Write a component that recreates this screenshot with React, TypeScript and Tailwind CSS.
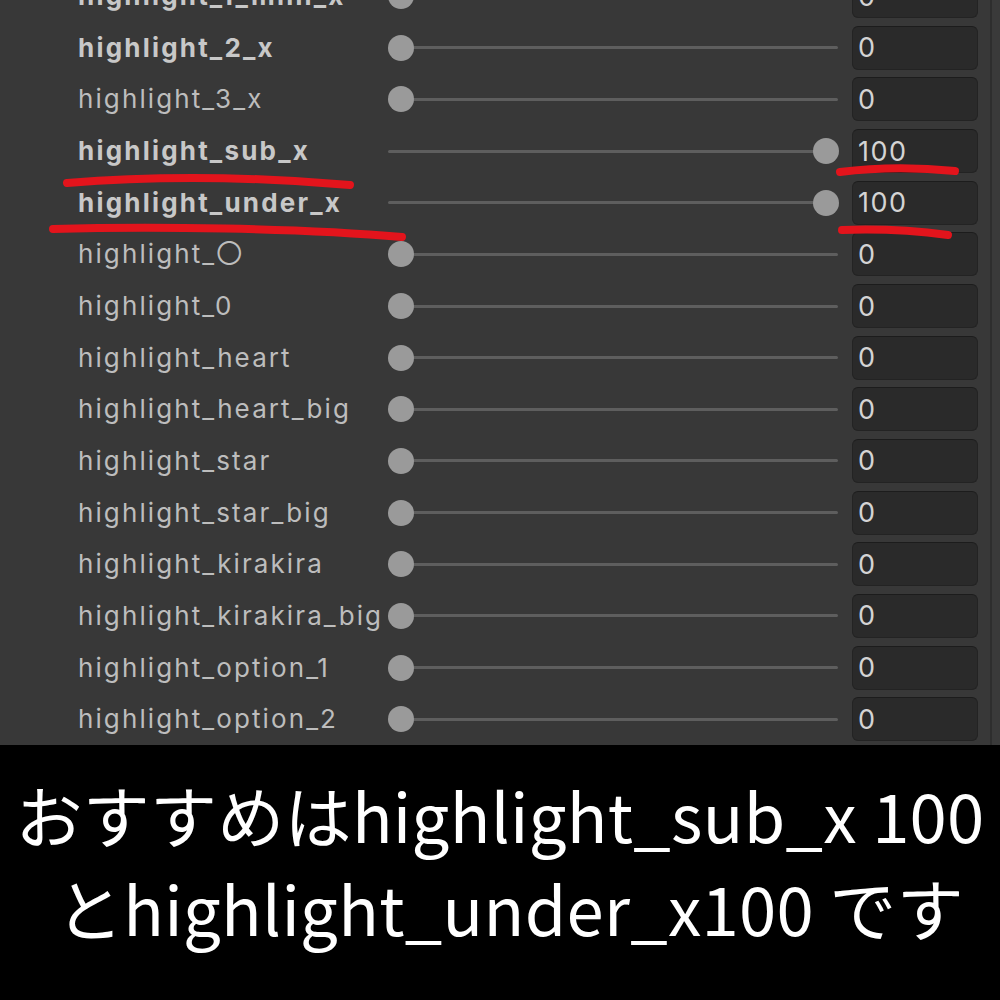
import React from "react";

type Row = { label: string; value: number; bold?: boolean };

const rows: Row[] = [
  { label: "highlight_1_mini_x", value: 0, bold: true },
  { label: "highlight_2_x", value: 0, bold: true },
  { label: "highlight_3_x", value: 0 },
  { label: "highlight_sub_x", value: 100, bold: true },
  { label: "highlight_under_x", value: 100, bold: true },
  { label: "highlight_〇", value: 0 },
  { label: "highlight_0", value: 0 },
  { label: "highlight_heart", value: 0 },
  { label: "highlight_heart_big", value: 0 },
  { label: "highlight_star", value: 0 },
  { label: "highlight_star_big", value: 0 },
  { label: "highlight_kirakira", value: 0 },
  { label: "highlight_kirakira_big", value: 0 },
  { label: "highlight_option_1", value: 0 },
  { label: "highlight_option_2", value: 0 },
];

function SliderRow({ row }: { row: Row }) {
  const pos = (row.value / 100) * 425;
  return (
    <div className="flex items-center h-[51.77px]">
      <div
        className={
          "w-[388px] shrink-0 pl-[78px] whitespace-nowrap overflow-visible text-[26px] leading-none " +
          (row.bold
            ? "font-bold tracking-[2.2px] text-[#c8c8c8]"
            : "font-normal tracking-[2.1px] text-[#bdbdbd]")
        }
        style={{ fontFamily: "Inter, 'Noto Sans CJK JP', sans-serif" }}
      >
        {row.label}
      </div>
      <div className="relative shrink-0 w-[450px] h-[26px] flex items-center">
        <div className="w-full h-[3px] bg-[#5e5e5e] rounded-full" />
        <div
          className="absolute top-0 w-[26px] h-[26px] rounded-full bg-[#9a9a9a]"
          style={{ left: pos }}
        />
      </div>
      <div className="ml-[14px] shrink-0 w-[126px] h-[44px] rounded-[6px] bg-[#2a2a2a] border border-[#232323] border-t-[#1c1c1c] flex items-center pl-[5px]">
        <span
          className="text-[27px] leading-none tracking-[1.5px] text-[#d4d4d4]"
          style={{ fontFamily: "Inter, sans-serif" }}
        >
          {row.value}
        </span>
      </div>
    </div>
  );
}

export default function App() {
  return (
    <div className="relative w-[1000px] h-[1000px] overflow-hidden bg-black">
      <div className="flex h-[745px] bg-[#383838] overflow-hidden">
        <div className="w-[990px] shrink-0 mt-[-29.65px] flex flex-col">
          {rows.map((r) => (
            <SliderRow key={r.label} row={r} />
          ))}
        </div>
        <div className="w-[2px] bg-[#2e2e2e]" />
        <div className="flex-1 bg-[#3a3a3a]" />
      </div>
      <div
        className="h-[255px] flex flex-col items-center pt-[22px] text-white text-[67px] leading-[93px]"
        style={{ fontFamily: "'Noto Sans CJK JP', sans-serif" }}
      >
        <div className="whitespace-nowrap tracking-[0.3px]">おすすめはhighlight_sub_x 100</div>
        <div className="whitespace-nowrap pl-[20px] tracking-[0.3px]">とhighlight_under_x100 です</div>
      </div>
      <svg
        className="absolute inset-0 pointer-events-none"
        width="1000"
        height="1000"
        viewBox="0 0 1000 1000"
      >
        <g fill="none" stroke="#e3141c" strokeWidth="8" strokeLinecap="round">
          <path d="M67 183 Q 200 172 350 185" />
          <path d="M53 229 C 150 226 300 228 402 237" />
          <path d="M840 172 Q 895 165 955 171" />
          <path d="M842 230 Q 895 228 948 235" />
        </g>
      </svg>
    </div>
  );
}
